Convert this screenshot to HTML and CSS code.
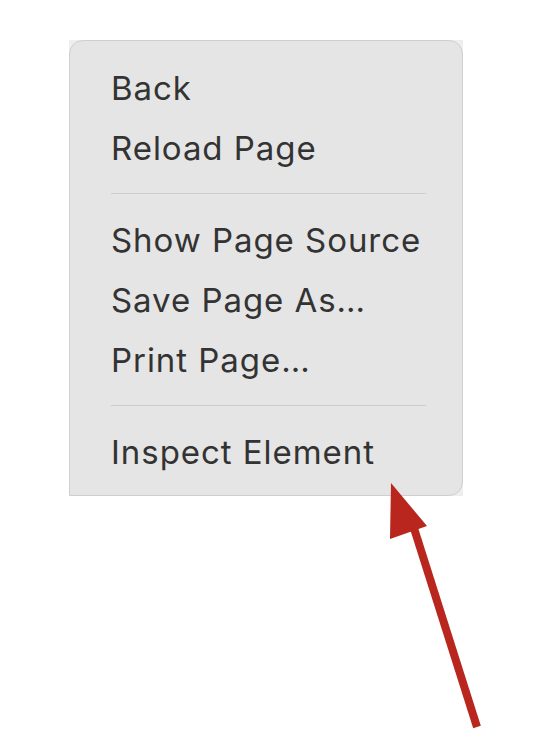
FILE: index.html
```html
<!DOCTYPE html>
<html>
<head>
<meta charset="utf-8">
<link rel="stylesheet" href="styles.css">
</head>
<body>
<div class="frame">
  <div class="menu">
    <div class="item">Back</div>
    <div class="item">Reload Page</div>
    <div class="sep"></div>
    <div class="item">Show Page Source</div>
    <div class="item">Save Page As…</div>
    <div class="item">Print Page…</div>
    <div class="sep"></div>
    <div class="item">Inspect Element</div>
  </div>
</div>
<svg class="arrow" width="546" height="734" viewBox="0 0 546 734">
  <line x1="412" y1="522" x2="477" y2="727" stroke="#b8261d" stroke-width="8"/>
  <polygon points="391,483 390,539 427,526" fill="#b8261d"/>
</svg>
</body>
</html>
```

FILE: styles.css
```css
html, body {
  margin: 0;
  padding: 0;
  background: #ffffff;
}
body {
  width: 546px;
  height: 734px;
  position: relative;
  overflow: hidden;
}
.frame {
  margin-left: 69px;
  margin-top: 40px;
  width: 394px;
  height: 456px;
  background: #eeeeee;
  box-sizing: border-box;
}
.menu {
  height: 456px;
  box-sizing: border-box;
  background: #e5e5e5;
  border: 1px solid #cfcfcf;
  border-radius: 14px 14px 14px 14px;
  border-bottom-left-radius: 0;
  padding: 17px 0 12px 41px;
  font-family: Inter, "Liberation Sans", sans-serif;
  font-size: 33px;
  letter-spacing: 0.95px;
  color: #333333;
}
.item {
  height: 60px;
  line-height: 60px;
  white-space: nowrap;
}
.sep {
  height: 32px;
  position: relative;
}
.sep::after {
  content: "";
  position: absolute;
  left: 0;
  width: 315px;
  top: 15px;
  height: 1px;
  background: #cdcdcd;
}
.arrow {
  position: absolute;
  left: 0;
  top: 0;
}
```
